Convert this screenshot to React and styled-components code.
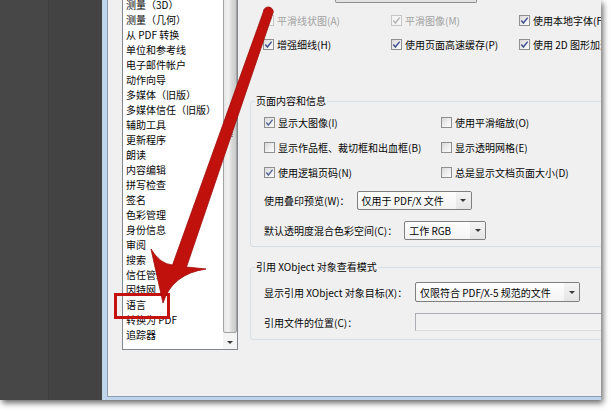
import React from "react";
import styled, { createGlobalStyle } from "styled-components";

const GlobalStyle = createGlobalStyle`
  html, body {
    margin: 0;
    padding: 0;
    background: #ffffff;
  }
  body {
    width: 611px;
    height: 411px;
    overflow: hidden;
    font-family: "Noto Sans CJK SC", "Noto Sans", sans-serif;
    font-size: 10px;
    color: #050505;
  }
`;

const Shot = styled.div`
  position: relative;
  width: 601px;
  height: 400px;
  display: flex;
  box-shadow: 2px 3px 6px rgba(0, 0, 0, 0.6);
`;

const DarkPanel = styled.div`
  width: 102px;
  flex-shrink: 0;
  background: linear-gradient(
    to right,
    #474747 0,
    #474747 48px,
    #3f3f3f 48px,
    #3f3f3f 49px,
    #434343 49px
  );
`;

const Frame = styled.div`
  flex: 1;
  display: flex;
  min-width: 0;
  border-left: 5px solid #bfd5ec;
  border-bottom: 3px solid #bfd5ec;
`;

const Client = styled.div`
  flex: 1;
  display: flex;
  min-width: 0;
  overflow: hidden;
  background: #f0f0f0;
  border-left: 1px solid #8c9db0;
  border-bottom: 1px solid #8c9db0;
  padding-left: 14px;
`;

const ListBox = styled.div`
  width: 116px;
  height: 351px;
  margin-top: -1px;
  flex-shrink: 0;
  box-sizing: border-box;
  border: 1px solid #828790;
  background: #ffffff;
  display: flex;
  overflow: hidden;
`;

const Items = styled.div`
  flex: 1;
  margin-top: -3px;
  padding-left: 3px;
`;

const Item = styled.div`
  height: 15px;
  line-height: 15px;
  white-space: nowrap;
`;

const ScrollBar = styled.div`
  width: 14px;
  display: flex;
  flex-direction: column;
  gap: 2px;
  background: #f4f4f4;
`;

const Thumb = styled.div`
  flex: 1;
  margin-top: -2px;
  border: 1px solid #a3a3a3;
  border-radius: 0 0 2px 2px;
  background: linear-gradient(to right, #e6e6e6, #f2f2f2 35%, #dadada 65%, #c9c9c9);
  display: flex;
  flex-direction: column;
  align-items: center;
  padding-top: 133px;
  gap: 1px;
`;

const Grip = styled.span`
  width: 5px;
  height: 1px;
  background: #8a8a8a;
`;

const ArrowButton = styled.div`
  height: 14px;
  display: flex;
  align-items: center;
  justify-content: center;
`;

const DownTriangle = styled.span`
  width: 0;
  height: 0;
  border-left: 3px solid transparent;
  border-right: 3px solid transparent;
  border-top: 3px solid #3a3a3a;
`;

const Pane = styled.div`
  width: 380px;
  flex-shrink: 0;
  margin-left: 12px;
  display: flex;
  flex-direction: column;
`;

const TopCombo = styled.div`
  width: 142px;
  height: 3px;
  margin-left: 85px;
  box-sizing: border-box;
  border: 1px solid #8e8e8e;
  border-top: none;
  border-radius: 0 0 2px 2px;
  background: #e2e2e2;
`;

const CheckGrid = styled.div`
  display: grid;
  grid-template-columns: ${(p) => p.$cols};
  grid-auto-rows: ${(p) => p.$row}px;
  margin-top: ${(p) => p.$top || 0}px;
  padding-left: 13px;
`;

const CheckItem = styled.div`
  display: flex;
  align-items: center;
  gap: 3px;
  white-space: nowrap;
  color: ${(p) => (p.$disabled ? "#a2a2a2" : "#050505")};
`;

const Box = styled.span`
  width: 11px;
  height: 11px;
  flex-shrink: 0;
  box-sizing: border-box;
  border: 1px solid ${(p) => (p.$disabled ? "#c6c6c6" : "#8e8f8f")};
  background: ${(p) =>
    p.$disabled
      ? "#f4f4f4"
      : "linear-gradient(135deg, #d9d9d9 0%, #f1f1f1 60%, #fbfbfb 100%)"};
  display: flex;
  align-items: center;
  justify-content: center;
`;

const Group = styled.fieldset`
  margin: ${(p) => p.$top}px 0 0 0;
  padding: 0;
  border: 1px solid #d5dfe5;
  border-radius: 3px;
  min-width: 0;
`;

const Legend = styled.legend`
  margin-left: 4px;
  padding: 0 1px;
  line-height: 14px;
  color: #050505;
`;

const GroupBody = styled.div`
  padding: ${(p) => p.$pad};
`;

const FieldRow = styled.div`
  height: 30px;
  display: flex;
  align-items: center;
  gap: 7px;
  padding-left: 13px;
  white-space: nowrap;
`;

const FieldLabel = styled.span`
  flex-shrink: 0;
  width: ${(p) => (p.$w ? `${p.$w}px` : "auto")};
`;

const Combo = styled.div`
  width: ${(p) => p.$w}px;
  height: ${(p) => p.$h}px;
  box-sizing: border-box;
  display: flex;
  align-items: center;
  border: 1px solid #7f7f7f;
  border-radius: 2px;
  background: linear-gradient(#fefefe, #f3f3f3);
  color: #050505;
`;

const ComboText = styled.span`
  flex: 1;
  padding-left: 4px;
  white-space: nowrap;
  overflow: hidden;
`;

const ComboButton = styled.span`
  width: 15px;
  align-self: stretch;
  display: flex;
  align-items: center;
  justify-content: center;
  background: linear-gradient(#f4f4f4, #e4e4e4);
  border-radius: 0 2px 2px 0;
`;

const TextField = styled.div`
  width: 200px;
  height: 18px;
  flex-shrink: 0;
  box-sizing: border-box;
  border: 1px solid #acadb2;
  border-bottom-color: #dcdcdc;
  border-right: none;
  background: #f1f1f1;
`;

const Overlay = styled.svg`
  position: absolute;
  left: 0;
  top: 0;
  pointer-events: none;
`;

const Check = ({ checked, disabled, tone, children }) => (
  <CheckItem $disabled={disabled}>
    <Box $disabled={disabled}>
      {checked && (
        <svg width="9" height="9" viewBox="0 0 9 9">
          <path
            d="M1.3 4.6 L3.4 7 L7.6 1.6"
            fill="none"
            stroke={disabled ? "#b4b4b4" : tone || "#3f5289"}
            strokeWidth="1.5"
          />
        </svg>
      )}
    </Box>
    <span>{children}</span>
  </CheckItem>
);

const Select = ({ w, h, children }) => (
  <Combo $w={w} $h={h}>
    <ComboText>{children}</ComboText>
    <ComboButton>
      <DownTriangle />
    </ComboButton>
  </Combo>
);

const listItems = [
  "测量（3D）",
  "测量（几何）",
  "从 PDF 转换",
  "单位和参考线",
  "电子邮件帐户",
  "动作向导",
  "多媒体（旧版）",
  "多媒体信任（旧版）",
  "辅助工具",
  "更新程序",
  "朗读",
  "内容编辑",
  "拼写检查",
  "签名",
  "色彩管理",
  "身份信息",
  "审阅",
  "搜索",
  "信任管理器",
  "因特网",
  "语言",
  "转换为 PDF",
  "追踪器",
];

const App = () => {
  return (
    <>
      <GlobalStyle />
      <Shot>
        <DarkPanel />
        <Frame>
          <Client>
            <ListBox>
              <Items>
                {listItems.map((label) => (
                  <Item key={label}>{label}</Item>
                ))}
              </Items>
              <ScrollBar>
                <Thumb>
                  <Grip />
                  <Grip />
                  <Grip />
                </Thumb>
                <ArrowButton>
                  <DownTriangle />
                </ArrowButton>
              </ScrollBar>
            </ListBox>

            <Pane>
              <TopCombo />
              <CheckGrid $cols="128px 128px 128px" $row={24} $top={5}>
                <Check checked disabled>
                  平滑线状图(A)
                </Check>
                <Check checked disabled>
                  平滑图像(M)
                </Check>
                <Check checked>使用本地字体(F)</Check>
                <Check checked>增强细线(H)</Check>
                <Check checked>使用页面高速缓存(P)</Check>
                <Check checked>使用 2D 图形加速(G)</Check>
              </CheckGrid>

              <Group $top={38}>
                <Legend>页面内容和信息</Legend>
                <GroupBody $pad="2px 0 1px 0">
                  <CheckGrid $cols="177px 200px" $row={25}>
                    <Check checked tone="#5b6c98">
                      显示大图像(I)
                    </Check>
                    <Check>使用平滑缩放(O)</Check>
                    <Check>显示作品框、裁切框和出血框(B)</Check>
                    <Check>显示透明网格(E)</Check>
                    <Check checked tone="#5b6c98">
                      使用逻辑页码(N)
                    </Check>
                    <Check>总是显示文档页面大小(D)</Check>
                  </CheckGrid>
                  <FieldRow>
                    <FieldLabel>使用叠印预览(W)：</FieldLabel>
                    <Select w={115} h={19}>
                      仅用于 PDF/X 文件
                    </Select>
                  </FieldRow>
                  <FieldRow>
                    <FieldLabel>默认透明度混合色彩空间(C)：</FieldLabel>
                    <Select w={82} h={19}>
                      工作 RGB
                    </Select>
                  </FieldRow>
                </GroupBody>
              </Group>

              <Group $top={13}>
                <Legend>引用 XObject 对象查看模式</Legend>
                <GroupBody $pad="3px 0 2px 0">
                  <FieldRow>
                    <FieldLabel $w={144}>显示引用 XObject 对象目标(X)：</FieldLabel>
                    <Select w={165} h={20}>
                      仅限符合 PDF/X-5 规范的文件
                    </Select>
                  </FieldRow>
                  <FieldRow>
                    <FieldLabel $w={144}>引用文件的位置(C)：</FieldLabel>
                    <TextField />
                  </FieldRow>
                </GroupBody>
              </Group>
            </Pane>
          </Client>
        </Frame>

        <Overlay width="611" height="411" viewBox="0 0 611 411">
          <rect
            x="115.5"
            y="294.5"
            width="53"
            height="23"
            fill="none"
            stroke="#c4120e"
            strokeWidth="3"
          />
          <path
            d="M263.3 12 A5 5 0 0 1 273.3 12 L186.5 267 L206 269 Q172 274 163 303 L151 249 Q160 264 172.5 265 Z"
            fill="#c0110d"
            stroke="#a00c09"
            strokeWidth="0.8"
            strokeLinejoin="round"
          />
        </Overlay>
      </Shot>
    </>
  );
};

export default App;
